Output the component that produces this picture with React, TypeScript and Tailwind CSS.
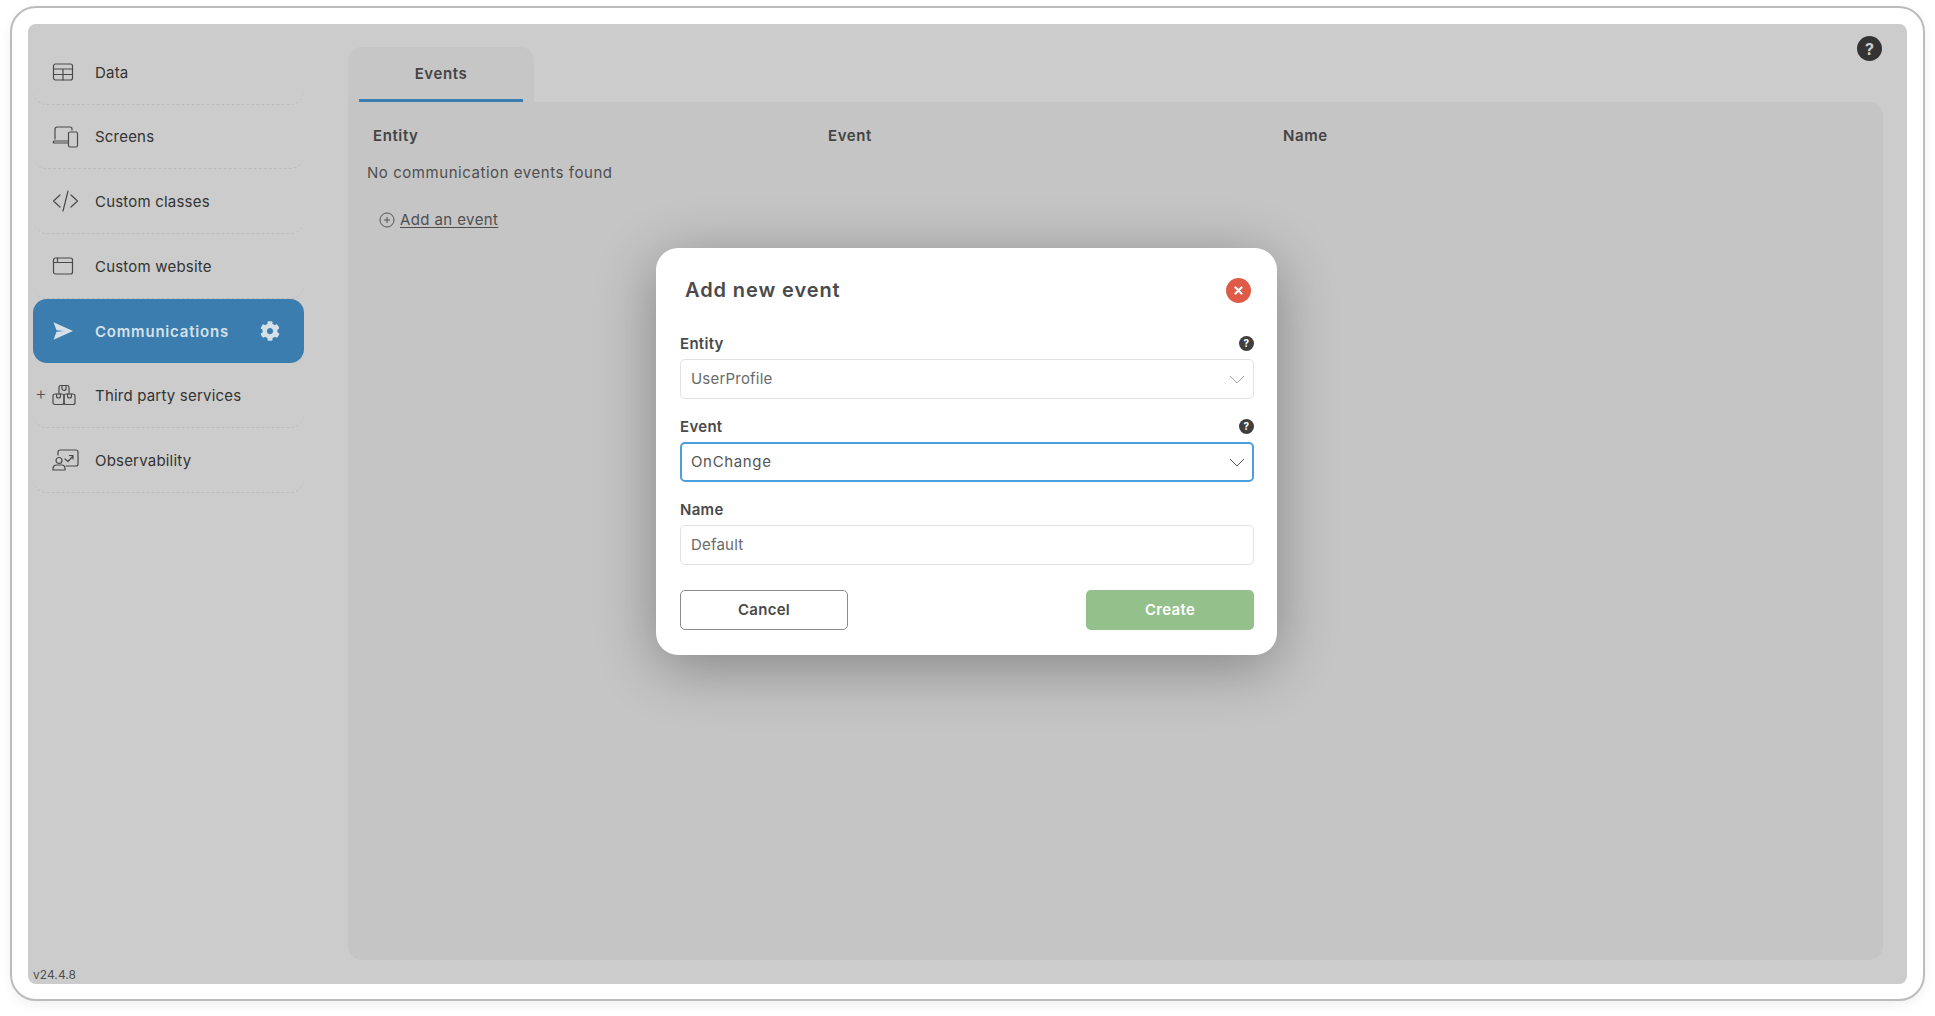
import React from "react";
import { FaCog } from "react-icons/fa";

const S = "#4a4a4a";
const ic = { fill: "none", stroke: S, strokeWidth: 1.2, strokeLinecap: "round" as const, strokeLinejoin: "round" as const };

const DataIcon = () => (
  <svg width="22" height="20" viewBox="0 0 22 20" {...ic}>
    <rect x="1.5" y="2" width="19" height="16" rx="2" />
    <path d="M1.5 7h19M1.5 12.500h19M11 7v11" />
  </svg>
);
const ScreensIcon = () => (
  <svg width="27" height="22" viewBox="0 0 27 22" {...ic}>
    <path d="M3 13V3a2 2 0 0 1 2-2h13a2 2 0 0 1 2 2v1" />
    <path d="M16 15H2c-1 0-1 2 0 2h14" />
    <rect x="16.500" y="6" width="9" height="15" rx="1.500" />
  </svg>
);
const CodeIcon = () => (
  <svg width="27" height="22" viewBox="0 0 27 22" {...ic}>
    <path d="M8 5l-6.500 6L8 17M19 5l6.500 6L19 17M16 1l-5 20" />
  </svg>
);
const WebIcon = () => (
  <svg width="22" height="20" viewBox="0 0 22 20" {...ic}>
    <rect x="1.500" y="2" width="19" height="16" rx="2" />
    <path d="M1.500 6.500h19M5.500 2v4.500" />
  </svg>
);
const SendIcon = () => (
  <svg width="22" height="20" viewBox="0 0 22 20">
    <path d="M1.500 1.200 21 10 1.500 18.800 4.500 10.800 12 10 4.500 9.200z" fill="#d6e0e8" />
  </svg>
);
const BoxesIcon = () => (
  <svg width="24" height="22" viewBox="0 0 24 22" {...ic}>
    <path d="M7 10V3a1.500 1.500 0 0 1 1.500-1.500h7A1.500 1.500 0 0 1 17 3v7" />
    <path d="M10 1.500v3a2 2 0 0 0 4 0v-3" />
    <rect x="1" y="10" width="11" height="10.500" rx="2" />
    <rect x="12" y="10" width="11" height="10.500" rx="2" />
    <path d="M4.500 10v2a2 2 0 0 0 4 0v-2M15.500 10v2a2 2 0 0 0 4 0v-2" />
  </svg>
);
const ObsIcon = () => (
  <svg width="27" height="22" viewBox="0 0 27 22" {...ic}>
    <path d="M6 6V3a2 2 0 0 1 2-2h16a2 2 0 0 1 2 2v12a2 2 0 0 1-2 2H14" />
    <path d="M13 10l3 2.500 5-5.500M17.500 6.500H21V10" />
    <circle cx="7" cy="11.500" r="3" />
    <path d="M1 21v-1.500A3.500 3.500 0 0 1 4.500 16h5a3.500 3.500 0 0 1 3.500 3.500V21z" />
  </svg>
);
const Chevron = ({ c }: { c: string }) => (
  <svg width="16" height="9" viewBox="0 0 16 9" fill="none" stroke={c} strokeWidth="1">
    <path d="M1 1l7 7 7-7" />
  </svg>
);
const Help = () => (
  <div className="-mt-[1px] flex h-[15px] w-[15px] items-center justify-center rounded-full bg-[#3f3f3f] text-[10px] font-bold text-white">?</div>
);

const items: { label: string; icon: React.ReactNode; active?: boolean; plus?: boolean }[] = [
  { label: "Data", icon: <DataIcon /> },
  { label: "Screens", icon: <ScreensIcon /> },
  { label: "Custom classes", icon: <CodeIcon /> },
  { label: "Custom website", icon: <WebIcon /> },
  { label: "Communications", icon: <SendIcon />, active: true },
  { label: "Third party services", icon: <BoxesIcon />, plus: true },
  { label: "Observability", icon: <ObsIcon /> },
];

function NavItem({ label, icon, active, plus }: { label: string; icon: React.ReactNode; active?: boolean; plus?: boolean }) {
  if (active)
    return (
      <div className="flex h-[64.7px] items-center rounded-[14px] bg-[#3a7dae] pl-[19px] pr-[24px]">
        <div className="w-[43px]">{icon}</div>
        <span className="flex-1 pt-[2px] text-[15px] font-semibold tracking-[0.8px] text-[#d6e0e8]">{label}</span>
        <FaCog className="text-[20px] text-[#d6e0e8]" />
      </div>
    );
  return (
    <div className="relative flex h-[64.7px] items-center rounded-b-[14px] border-b border-dashed border-[#bcbcbc] pl-[19px]">
      {plus && <span className="absolute left-[2px] top-[21px] text-[18px] font-light leading-[20px] text-[#555]">+</span>}
      <div className="w-[43px]">{icon}</div>
      <span className="pt-[2px] text-[15px] tracking-[0.2px] text-[#333]">{label}</span>
    </div>
  );
}

function Field({ label, value, help, focus }: { label: string; value: string; help?: boolean; focus?: boolean }) {
  return (
    <div className="flex flex-col">
      <div className="flex h-[26px] items-center justify-between text-[15px] font-semibold tracking-[0.3px] text-[#4a4a4a]">
        <span>{label}</span>
        {help && <Help />}
      </div>
      <div
        className={
          focus
            ? "mt-[2px] flex h-[40px] items-center justify-between rounded-[5px] border-2 border-[#4a9fdc] pl-[9px] pr-[7px] text-[15px] tracking-[0.65px] text-[#555]"
            : "mt-[2px] flex h-[40px] items-center justify-between rounded-[5px] border border-[#e2e2e2] pl-[10px] pr-[8px] text-[15px] tracking-[0.2px] text-[#6a6a6a]"
        }
      >
        <span>{value}</span>
        {help && <Chevron c={focus ? "#555" : "#aaa"} />}
      </div>
    </div>
  );
}

export default function App() {
  return (
    <div className="h-[1016px] w-[1935px] overflow-hidden bg-white pl-[10px] pt-[6px] font-['Inter',sans-serif]">
      <div className="h-[995px] w-[1915px] rounded-[26px] border-2 border-[#bcbcbc] bg-white px-[16px] pb-[14px] pt-[16px] shadow-[0_4px_12px_rgba(0,0,0,0.06)]">
        <div className="relative flex h-[960px] rounded-[8px] bg-[#cccccc]">
          <aside className="flex w-[320px] shrink-0 flex-col pl-[5px] pt-[16px]">
            <div className="flex w-[271px] flex-col">
              {items.map((i) => (
                <NavItem key={i.label} {...i} />
              ))}
            </div>
            <div className="mt-auto pb-[1px] text-[12px] leading-[16px] tracking-[0.05px] text-[#4f4f4f]">v24.4.8</div>
          </aside>

          <main className="flex min-w-0 flex-1 flex-col pb-[24px] pr-[24px] pt-[23px]">
            <div className="flex h-[55px] w-[186px] justify-center rounded-t-[14px] bg-[#c6c6c6] px-[11px]">
              <div className="flex h-full w-full items-center justify-center border-b-[3px] border-[#3a7dae] pt-[3px] text-[15px] font-semibold tracking-[0.6px] text-[#444]">
                Events
              </div>
            </div>
            <div className="flex-1 rounded-b-[14px] rounded-tr-[14px] bg-[#c5c5c5]">
              <div className="grid grid-cols-[455px_455px_1fr] pl-[25px] pt-[23px] text-[15px] font-semibold tracking-[0.6px] text-[#444]">
                <span>Entity</span>
                <span>Event</span>
                <span>Name</span>
              </div>
              <div className="pl-[19px] pt-[14px] text-[15px] tracking-[0.55px] text-[#4f4f4f]">No communication events found</div>
              <div className="flex items-center gap-[5px] pl-[31px] pt-[25px] text-[15px] tracking-[0.4px] text-[#4f4f4f]">
                <svg width="16" height="16" viewBox="0 0 16 16" fill="none" stroke="#555" strokeWidth="1">
                  <circle cx="8" cy="8" r="7" />
                  <path d="M8 5v6M5 8h6" />
                </svg>
                <span className="underline underline-offset-2">Add an event</span>
              </div>
            </div>
          </main>

          <button className="absolute right-[25px] top-[12px] flex h-[25px] w-[25px] items-center justify-center rounded-full bg-[#333] text-[16px] font-bold text-[#ccc]">?</button>

          <div className="absolute left-[628px] top-[224px] flex h-[407px] w-[621px] flex-col rounded-[22px] bg-white pl-[24px] pr-[23px] pt-[23px] shadow-[0_12px_60px_rgba(0,0,0,0.33)]">
            <div className="flex h-[38px] shrink-0 items-center justify-between pl-[5px] pr-[3px]">
              <span className="text-[20px] font-semibold tracking-[0.9px] text-[#4a4a4a]">Add new event</span>
              <div className="flex h-[25px] w-[25px] items-center justify-center rounded-full bg-[#e05a48]">
                <svg width="9" height="9" viewBox="0 0 9 9" stroke="#fff" strokeWidth="2.200" strokeLinecap="round">
                  <path d="M1.500 1.500l6 6M7.500 1.500l-6 6" />
                </svg>
              </div>
            </div>
            <div className="mt-[22px] flex flex-col gap-[15px]">
              <Field label="Entity" value="UserProfile" help />
              <Field label="Event" value="OnChange" help focus />
              <Field label="Name" value="Default" />
            </div>
            <div className="mt-[25px] flex justify-between">
              <button className="h-[40px] w-[168px] rounded-[5px] border border-[#8c8c8c] text-[15px] font-semibold tracking-[0.3px] text-[#4a4a4a]">Cancel</button>
              <button className="h-[40px] w-[168px] rounded-[5px] bg-[#93c08b] text-[15px] font-semibold tracking-[0.3px] text-white">Create</button>
            </div>
          </div>
        </div>
      </div>
    </div>
  );
}
